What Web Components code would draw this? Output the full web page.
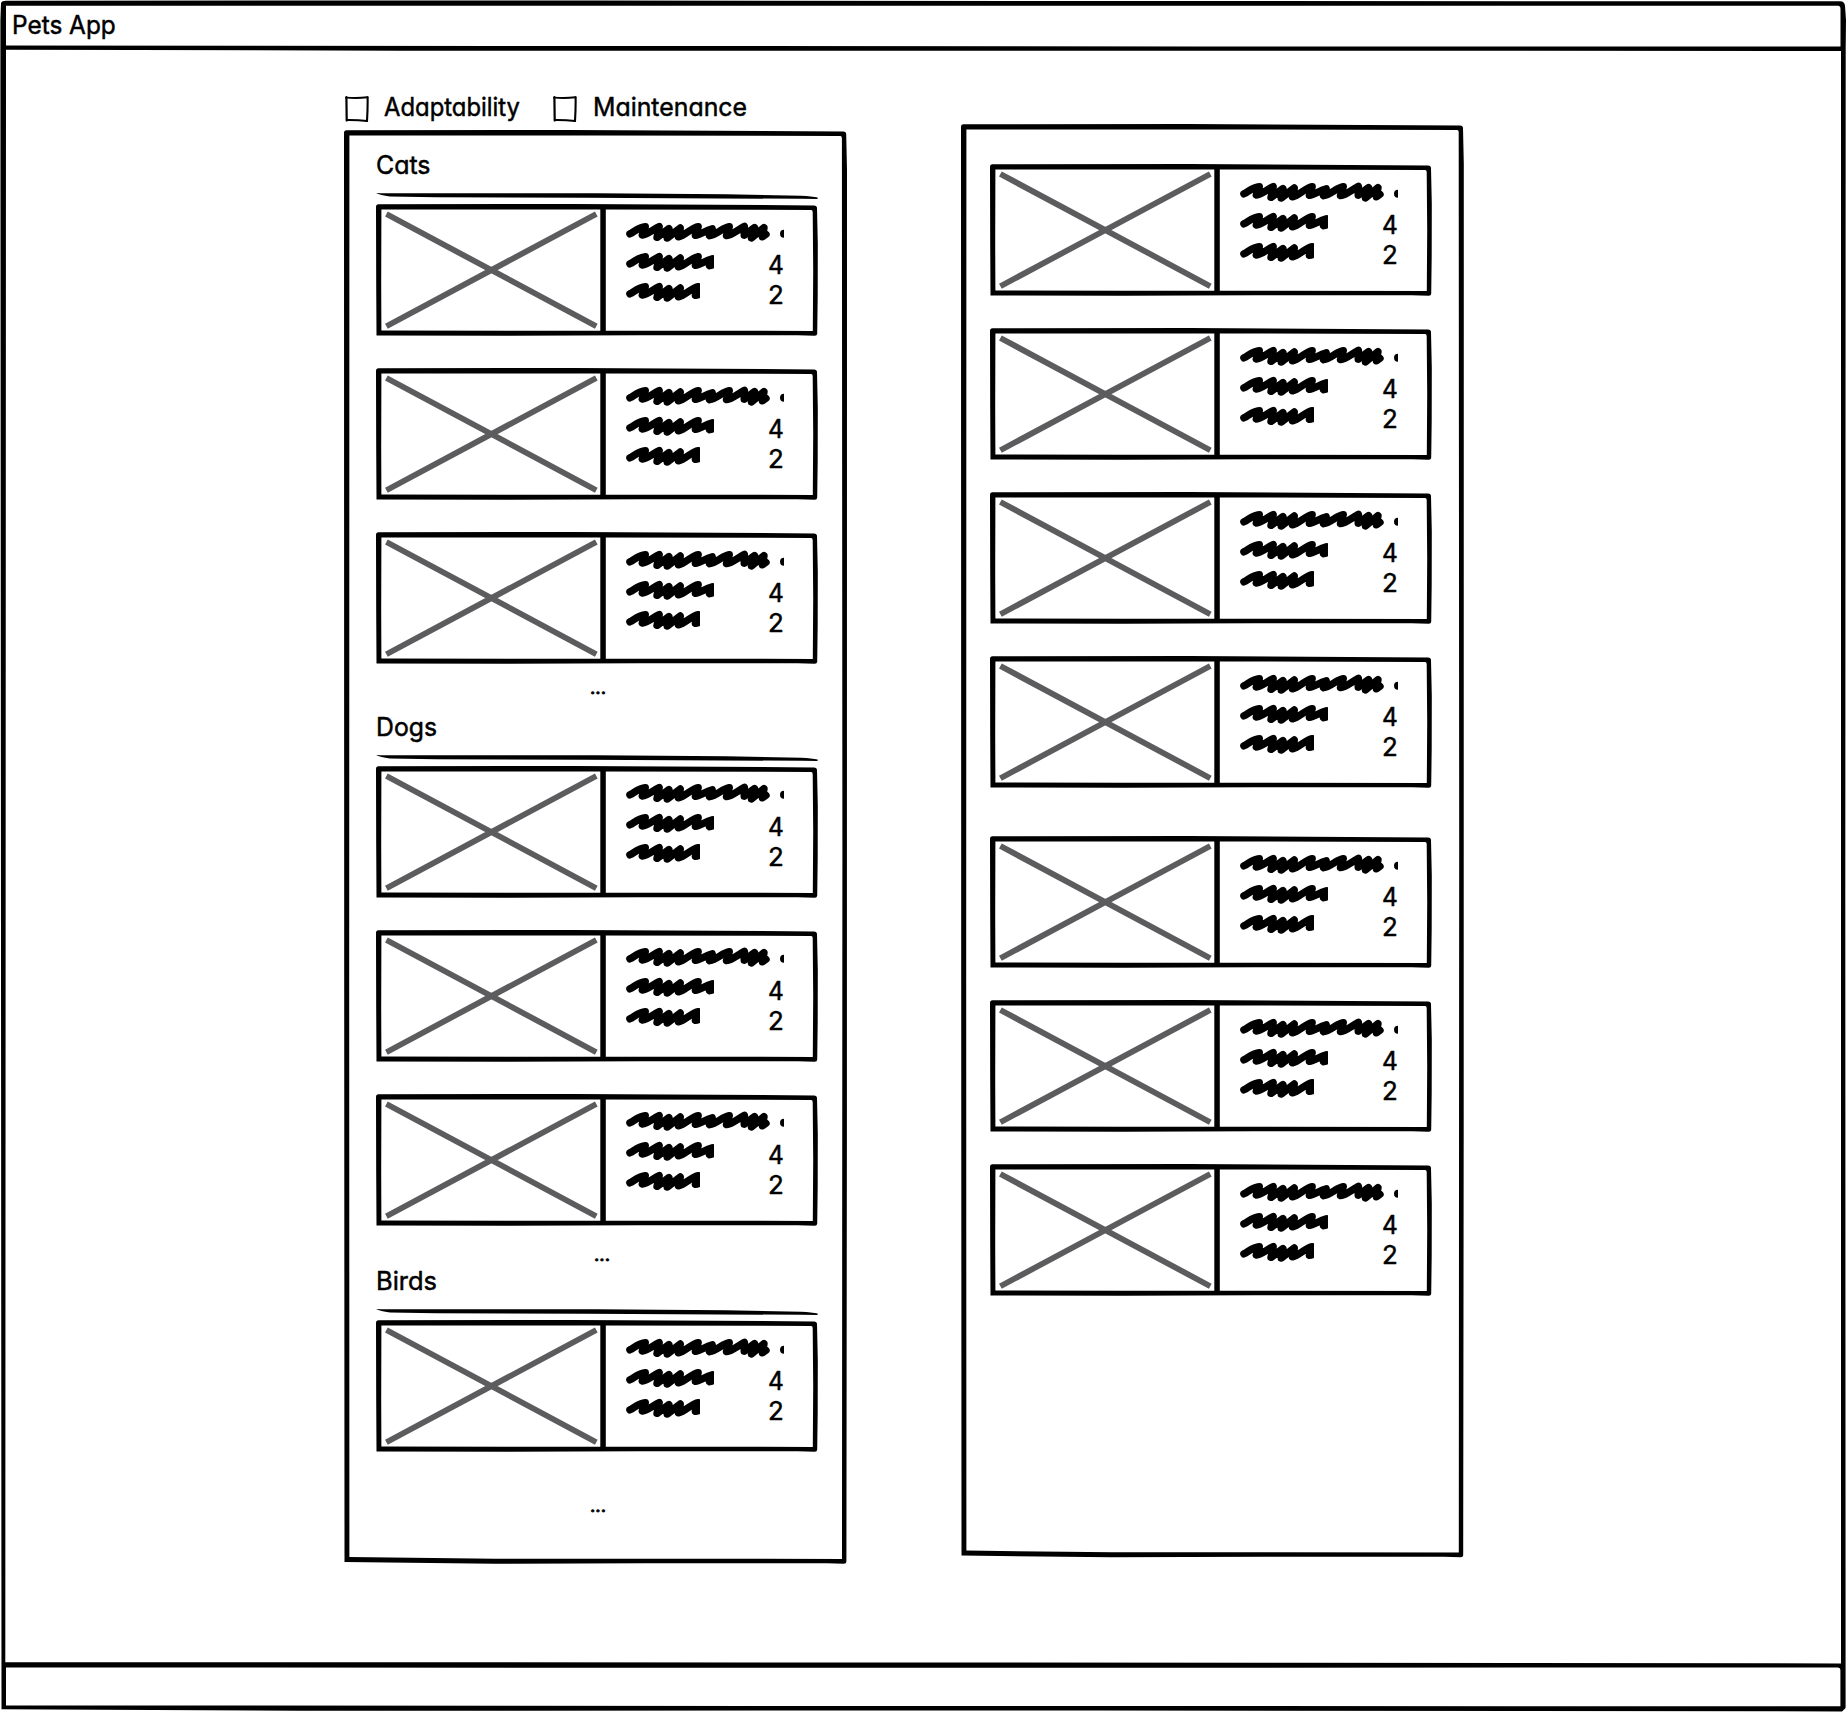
<!DOCTYPE html>
<html lang="en">
<head>
<meta charset="utf-8">
<title>Pets App</title>
<style>
html,body{margin:0;background:#fff;color:#000;font-family:Inter,"Liberation Sans",sans-serif}
</style>
</head>
<body>
<pets-app></pets-app>
<script>
const define = (name, cls) => customElements.define(name, cls);
class Base extends HTMLElement {
  connectedCallback() {
    if (this.shadowRoot) return;
    this.attachShadow({ mode: 'open' }).innerHTML = this.render();
  }
  num(n, d = 0) { return this.hasAttribute(n) ? parseFloat(this.getAttribute(n)) : d; }
}

// Hand drawn rectangle with slotted content stacked above it
define('sketch-frame', class extends Base {
  render() {
    const w = this.num('w'), h = this.num('h'), s = this.num('sag');
    const outer = `M0 3Q0 .4 2.5 .3L${w*.45} 0L${w-4} 1.4Q${w-.9} 1.3 ${w-.8} 4L${w} ${Math.min(40,h*.4)}L${w-.1} ${h*.7}L${w-.6} ${h-2}Q${w-.8} ${h} ${w-3} ${h}L${w-20} ${h-.5}L${w*.6} ${h-.5}L${w*.3} ${h}L.5 ${h-.4-s}L.2 ${h*.6}Z`;
    const inner = `M5.4 5.6L5.2 ${h*.6}L5.4 ${h-5.4-s}L${w*.3} ${h-5.1}L${w-5} ${h-4.9}L${w-4.6} ${h*.5}L${w-5.1} 8Q${w-5.2} 6 ${w-6.6} 6L${w*.5} 5.4Z`;
    return `<style>:host{display:grid;width:${w}px;height:${h}px}svg,.c{grid-area:1/1;min-width:0}svg{display:block;overflow:visible}</style>
    <svg width="${w}" height="${h}"><path fill-rule="evenodd" d="${outer}${inner}"/></svg><div class="c"><slot></slot></div>`;
  }
});

// Single line of lettering, fitted to its drawn width
define('sketch-label', class extends Base {
  render() {
    const w = this.num('w'), size = this.num('size', 25.8), bold = this.num('ink', .5);
    return `<style>:host{display:block;height:26px;width:${w}px}svg{display:block;overflow:visible}
    text{font:400 ${size}px Inter,"Liberation Sans",sans-serif;font-feature-settings:"cv11","ss03";stroke:#000;stroke-width:${bold}px;stroke-linejoin:round}</style>
    <svg width="${w}" height="26"><text x="0" y="20" textLength="${w}" lengthAdjust="spacingAndGlyphs">${this.getAttribute('text')}</text></svg>`;
  }
});

define('sketch-check', class extends Base {
  render() {
    return `<style>:host{display:block;width:24px;height:26px}svg{display:block}</style>
    <svg width="24" height="26" fill="none" stroke="#000" stroke-linecap="round"><path stroke-width="2.2" d="M1.4 1.2L1.7 24.6"/><path stroke-width="1.9" d="M1.2 1.6Q12 2.6 22.5 1.3M1.7 24Q12 23.8 22 25"/><path stroke-width="2.1" d="M22.6 1.3Q22.8 13 22 25"/></svg>`;
  }
});

define('sketch-rule', class extends Base {
  render() {
    return `<style>:host{display:block;height:7px}svg{display:block;overflow:visible}</style>
    <svg width="442" height="7"><path d="M0 0L5 .3L220 .2L350 1.3L425 2.7Q436 3.3 441.6 4.6L441.6 6L425 5.8L210 4.8L60 4.2L14 3.6Q4 2 0 0Z"/></svg>`;
  }
});

define('scribble-line', class extends Base {
  render() {
    const w = this.num('w');
    return `<style>:host{display:block;height:22px;width:${w}px}svg{display:block;overflow:hidden}</style>
    <svg width="${w}" height="22"><g fill="none" stroke="#000" stroke-width="7.4" stroke-linecap="round" stroke-linejoin="round">
    <path d="M3.9 11.8C8.5 9.5 13 5 19.3 4.6L16.3 13C21.5 12.5 27 7.5 33.2 4.6L31 15.4L43 6.6L41.3 16L54.3 6L52.5 14.9C59 13.5 66 5.4 72.2 4.6L69.4 13.4C74.5 13 79 8.5 86.2 6.8L83.5 13.7C91 12.5 97 5.4 103.3 4.6L100.5 13.6C106 13 112 7.6 118.4 4.4L118.2 13.2L128.6 5.6L125.5 16L138 5.6L136.5 14.8L140 12.3"/><path d="M35 13L48 12M120 12L136 11" stroke-width="6"/></g><circle cx="158" cy="11.7" r="4"/></svg>`;
  }
});

define('pet-card', class extends Base {
  render() {
    return `<style>:host{display:block}
    .row{display:flex;height:132px}.pic{flex:0 0 229.5px}.pic svg{display:block}
    .info{display:flex;flex-direction:column;gap:8px;padding:17.6px 0 0 19.8px}
    .line{display:flex;height:22px;justify-content:space-between;width:159px;flex:none}
    .line sketch-label{margin:2.4px 1px 0 0}</style>
    <sketch-frame w="441.8" h="131.8"><div class="row">
      <div class="pic"><svg width="230" height="132"><path d="M10.4 10L220.3 122.2M10.4 122.2L220.3 10" stroke="#5c5c5e" stroke-width="5.8"/><path d="M224.3 4V128H229.8V4Z"/></svg></div>
      <div class="info">
        <div class="line"><scribble-line w="157.8"></scribble-line></div>
        <div class="line"><scribble-line w="87.8"></scribble-line><sketch-label w="15.8" text="4"></sketch-label></div>
        <div class="line"><scribble-line w="73.8"></scribble-line><sketch-label w="15.8" text="2"></sketch-label></div>
      </div></div></sketch-frame>`;
  }
});

define('pet-group', class extends Base {
  render() {
    return `<style>:host{display:block}.cards{display:flex;flex-direction:column;gap:32.2px;margin-top:4px}
    sketch-rule{margin-top:var(--rule-gap,12px)}</style>
    <sketch-label w="${this.num('w')}" text="${this.getAttribute('name')}"></sketch-label><sketch-rule></sketch-rule>
    <div class="cards"><slot></slot></div>`;
  }
});

define('pets-app', class extends Base {
  render() {
    const cards = n => '<pet-card></pet-card>'.repeat(n);
    return `<style>
    :host{display:grid;width:1846px;height:1712px;overflow:hidden}
    .outline,.page{grid-area:1/1}.outline{display:block}
    .page{display:flex;flex-direction:column;min-height:0}
    header{flex:0 0 50px;box-sizing:border-box;padding:13.5px 0 0 12.4px}
    main{flex:1;display:flex;align-items:flex-start;padding-left:344.4px;gap:113.3px}
    footer{flex:0 0 48px}
    .opts{display:flex;height:34.6px;padding-top:45.8px;padding-left:.8px}
    .opts sketch-label{margin-top:.5px}
    .left{padding:23.7px 0 0 31.9px}
    .right{display:flex;flex-direction:column;gap:32.2px;padding:40px 0 0 29.6px}
    .col2{padding-top:74px}
    .gap{margin-top:16px}
    </style>
    <svg class="outline" width="1846" height="1712"><path d="M1 3Q2 .8 6 .7L600 .5L1100 1L1840 1.3Q1844.8 1.3 1845 6L1846 20L1845.7 48L1845.3 900L1845.6 1708L1842 1711.4L1100 1710.5L300 1710.7L1.5 1709.3L.4 60L.4 20Z"/><path fill="#fff" d="M6 5.8L900 5.8L1838 5.7Q1840.3 5.7 1840.5 9L1840.5 46.6L1200 46.4L600 46L6 45.4ZM6 49.7L400 50.7L1100 50.7L1841 51L1841 1663.4L1300 1662.7L500 1662.3L5.3 1662.2ZM6 1667.5L700 1667.8L1838 1667.5Q1840.4 1667.6 1840.4 1670L1840.4 1706.2L900 1706L6 1705.4Z"/></svg>
    <div class="page">
      <header><sketch-label w="103.8" text="Pets App"></sketch-label></header>
      <main>
        <section>
          <div class="opts"><sketch-check></sketch-check><sketch-label style="margin-left:14.4px" w="136" text="Adaptability"></sketch-label>
          <sketch-check style="margin-left:33.6px"></sketch-check><sketch-label style="margin-left:15.4px" w="154" text="Maintenance"></sketch-label></div>
          <sketch-frame w="503" h="1433.8" sag="1.3"><div class="left">
            <pet-group style="--rule-gap:13px" name="Cats" w="54.5">${cards(3)}</pet-group>
            <sketch-label style="margin:10.1px 0 0 213.6px" size="18" ink=".9" w="16" text="..."></sketch-label>
            <pet-group style="margin-top:15.7px;--rule-gap:13px" name="Dogs" w="61">${cards(3)}</pet-group>
            <sketch-label style="margin:16px 0 0 217.6px" size="18" ink=".9" w="16" text="..."></sketch-label>
            <pet-group style="margin-top:2.6px;--rule-gap:13px" name="Birds" w="61">${cards(1)}</pet-group>
            <sketch-label style="margin:40.6px 0 0 213.6px" size="18" ink=".9" w="16" text="..."></sketch-label>
          </div></sketch-frame>
        </section>
        <section class="col2">
          <sketch-frame w="502.8" h="1433.3" sag="1.3"><div class="right">${cards(4)}<pet-card class="gap"></pet-card>${cards(2)}</div></sketch-frame>
        </section>
      </main>
      <footer></footer>
    </div>`;
  }
});
</script>
</body>
</html>
